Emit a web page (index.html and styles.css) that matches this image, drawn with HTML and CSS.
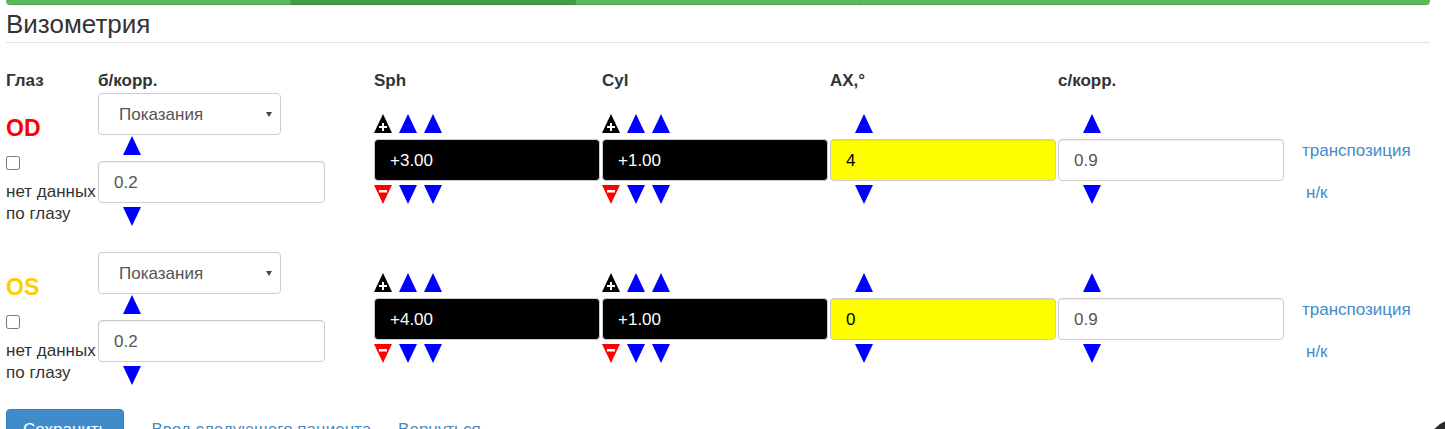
FILE: index.html
```html
<!DOCTYPE html>
<html lang="ru">
<head>
    <meta charset="UTF-8">
    <title>Визометрия</title>
    <link rel="stylesheet" href="styles.css">
</head>
<body>
<div class="page">

    <!-- steps -->
    <div class="progress">
        <div class="progress-bar"></div>
        <div class="progress-bar active"></div>
        <div class="progress-bar"></div>
        <div class="progress-bar"></div>
        <div class="progress-bar"></div>
    </div>

    <h3 class="page-title">Визометрия</h3>
    <hr>

    <div class="vis-grid vis-head">
        <div>Глаз</div>
        <div>б/корр.</div>
        <div>Sph</div>
        <div>Cyl</div>
        <div>AX,°</div>
        <div>с/корр.</div>
        <div></div>
    </div>

    <!-- OD -->
    <div class="vis-grid eye-row">
        <div class="eye-col">
            <div class="eye-name od">OD</div>
            <input type="checkbox" class="no-data-check">
            <div class="no-data">нет данных<br>по глазу</div>
        </div>
        <div class="sc-col">
            <div class="select-wrap">
                <select class="form-control"><option>Показания</option></select>
            </div>
            <div class="arrows arrows-up single">
                <svg class="tri" viewBox="0 0 18 19"><path d="M9 0L18 19H0z" fill="#00f"/></svg>
            </div>
            <input type="text" class="form-control wide" value="0.2">
            <div class="arrows arrows-down single">
                <svg class="tri" viewBox="0 0 18 19"><path d="M0 0H18L9 19z" fill="#00f"/></svg>
            </div>
        </div>
        <div class="val-col">
            <div class="arrows arrows-up">
                <svg class="tri" viewBox="0 0 18 19"><path d="M9 0L18 19H0z" fill="#000"/><path d="M8 9h2v3h3v2h-3v3H8v-3H5v-2h3z" fill="#fff"/></svg>
                <svg class="tri" viewBox="0 0 18 19"><path d="M9 0L18 19H0z" fill="#00f"/></svg>
                <svg class="tri" viewBox="0 0 18 19"><path d="M9 0L18 19H0z" fill="#00f"/></svg>
            </div>
            <input type="text" class="form-control dark" value="+3.00">
            <div class="arrows arrows-down">
                <svg class="tri" viewBox="0 0 18 19"><path d="M0 0H18L9 19z" fill="#f00"/><rect x="5" y="5" width="8" height="2.5" fill="#fff"/></svg>
                <svg class="tri" viewBox="0 0 18 19"><path d="M0 0H18L9 19z" fill="#00f"/></svg>
                <svg class="tri" viewBox="0 0 18 19"><path d="M0 0H18L9 19z" fill="#00f"/></svg>
            </div>
        </div>
        <div class="val-col">
            <div class="arrows arrows-up">
                <svg class="tri" viewBox="0 0 18 19"><path d="M9 0L18 19H0z" fill="#000"/><path d="M8 9h2v3h3v2h-3v3H8v-3H5v-2h3z" fill="#fff"/></svg>
                <svg class="tri" viewBox="0 0 18 19"><path d="M9 0L18 19H0z" fill="#00f"/></svg>
                <svg class="tri" viewBox="0 0 18 19"><path d="M9 0L18 19H0z" fill="#00f"/></svg>
            </div>
            <input type="text" class="form-control dark" value="+1.00">
            <div class="arrows arrows-down">
                <svg class="tri" viewBox="0 0 18 19"><path d="M0 0H18L9 19z" fill="#f00"/><rect x="5" y="5" width="8" height="2.5" fill="#fff"/></svg>
                <svg class="tri" viewBox="0 0 18 19"><path d="M0 0H18L9 19z" fill="#00f"/></svg>
                <svg class="tri" viewBox="0 0 18 19"><path d="M0 0H18L9 19z" fill="#00f"/></svg>
            </div>
        </div>
        <div class="val-col">
            <div class="arrows arrows-up single">
                <svg class="tri" viewBox="0 0 18 19"><path d="M9 0L18 19H0z" fill="#00f"/></svg>
            </div>
            <input type="text" class="form-control yellow" value="4">
            <div class="arrows arrows-down single">
                <svg class="tri" viewBox="0 0 18 19"><path d="M0 0H18L9 19z" fill="#00f"/></svg>
            </div>
        </div>
        <div class="val-col">
            <div class="arrows arrows-up single">
                <svg class="tri" viewBox="0 0 18 19"><path d="M9 0L18 19H0z" fill="#00f"/></svg>
            </div>
            <input type="text" class="form-control" value="0.9">
            <div class="arrows arrows-down single">
                <svg class="tri" viewBox="0 0 18 19"><path d="M0 0H18L9 19z" fill="#00f"/></svg>
            </div>
        </div>
        <div class="links-col">
            <a href="#" class="transp">транспозиция</a>
            <a href="#" class="nk">н/к</a>
        </div>
    </div>

    <!-- OS -->
    <div class="vis-grid eye-row">
        <div class="eye-col">
            <div class="eye-name os">OS</div>
            <input type="checkbox" class="no-data-check">
            <div class="no-data">нет данных<br>по глазу</div>
        </div>
        <div class="sc-col">
            <div class="select-wrap">
                <select class="form-control"><option>Показания</option></select>
            </div>
            <div class="arrows arrows-up single">
                <svg class="tri" viewBox="0 0 18 19"><path d="M9 0L18 19H0z" fill="#00f"/></svg>
            </div>
            <input type="text" class="form-control wide" value="0.2">
            <div class="arrows arrows-down single">
                <svg class="tri" viewBox="0 0 18 19"><path d="M0 0H18L9 19z" fill="#00f"/></svg>
            </div>
        </div>
        <div class="val-col">
            <div class="arrows arrows-up">
                <svg class="tri" viewBox="0 0 18 19"><path d="M9 0L18 19H0z" fill="#000"/><path d="M8 9h2v3h3v2h-3v3H8v-3H5v-2h3z" fill="#fff"/></svg>
                <svg class="tri" viewBox="0 0 18 19"><path d="M9 0L18 19H0z" fill="#00f"/></svg>
                <svg class="tri" viewBox="0 0 18 19"><path d="M9 0L18 19H0z" fill="#00f"/></svg>
            </div>
            <input type="text" class="form-control dark" value="+4.00">
            <div class="arrows arrows-down">
                <svg class="tri" viewBox="0 0 18 19"><path d="M0 0H18L9 19z" fill="#f00"/><rect x="5" y="5" width="8" height="2.5" fill="#fff"/></svg>
                <svg class="tri" viewBox="0 0 18 19"><path d="M0 0H18L9 19z" fill="#00f"/></svg>
                <svg class="tri" viewBox="0 0 18 19"><path d="M0 0H18L9 19z" fill="#00f"/></svg>
            </div>
        </div>
        <div class="val-col">
            <div class="arrows arrows-up">
                <svg class="tri" viewBox="0 0 18 19"><path d="M9 0L18 19H0z" fill="#000"/><path d="M8 9h2v3h3v2h-3v3H8v-3H5v-2h3z" fill="#fff"/></svg>
                <svg class="tri" viewBox="0 0 18 19"><path d="M9 0L18 19H0z" fill="#00f"/></svg>
                <svg class="tri" viewBox="0 0 18 19"><path d="M9 0L18 19H0z" fill="#00f"/></svg>
            </div>
            <input type="text" class="form-control dark" value="+1.00">
            <div class="arrows arrows-down">
                <svg class="tri" viewBox="0 0 18 19"><path d="M0 0H18L9 19z" fill="#f00"/><rect x="5" y="5" width="8" height="2.5" fill="#fff"/></svg>
                <svg class="tri" viewBox="0 0 18 19"><path d="M0 0H18L9 19z" fill="#00f"/></svg>
                <svg class="tri" viewBox="0 0 18 19"><path d="M0 0H18L9 19z" fill="#00f"/></svg>
            </div>
        </div>
        <div class="val-col">
            <div class="arrows arrows-up single">
                <svg class="tri" viewBox="0 0 18 19"><path d="M9 0L18 19H0z" fill="#00f"/></svg>
            </div>
            <input type="text" class="form-control yellow" value="0">
            <div class="arrows arrows-down single">
                <svg class="tri" viewBox="0 0 18 19"><path d="M0 0H18L9 19z" fill="#00f"/></svg>
            </div>
        </div>
        <div class="val-col">
            <div class="arrows arrows-up single">
                <svg class="tri" viewBox="0 0 18 19"><path d="M9 0L18 19H0z" fill="#00f"/></svg>
            </div>
            <input type="text" class="form-control" value="0.9">
            <div class="arrows arrows-down single">
                <svg class="tri" viewBox="0 0 18 19"><path d="M0 0H18L9 19z" fill="#00f"/></svg>
            </div>
        </div>
        <div class="links-col">
            <a href="#" class="transp">транспозиция</a>
            <a href="#" class="nk">н/к</a>
        </div>
    </div>

    <div class="actions">
        <button class="btn-save">Сохранить</button>
        <a href="#" class="next-link">Ввод следующего пациента</a>
        <a href="#" class="back-link">Вернуться</a>
    </div>

    <div class="corner-blob"></div>
</div>
</body>
</html>
```

FILE: styles.css
```css
/* General Page Styles */
body {
    font-family: "Liberation Sans", Arial, sans-serif;
    font-size: 17px;
    color: #333;
    background-color: #fff;
    margin: 0;
    padding: 0;
}

.page {
    height: 429px;
    overflow: hidden;
    padding: 0 15px 0 6px;
}

/* Progress steps */
.progress {
    display: flex;
    height: 5px;
    border-radius: 0 0 4px 4px;
    overflow: hidden;
}

.progress-bar {
    flex: 1;
    background-color: #5cb85c;
    box-shadow: inset 0 -1px 0 rgba(0, 0, 0, 0.12);
    border-right: 1px solid rgba(0, 0, 0, 0.08);
}

.progress-bar.active {
    background-color: #449d44;
}

.progress-bar:last-child {
    border-right: none;
}

/* Title */
.page-title {
    font-size: 26px;
    font-weight: 500;
    line-height: 32px;
    margin: 3px 0 0;
    color: #333;
}

hr {
    border: 0;
    border-top: 1px solid #e3e3e3;
    margin: 2px 0 0;
}

/* Grid */
.vis-grid {
    display: grid;
    grid-template-columns: 92px 276px 228px 228px 228px 244px 1fr;
}

.vis-head {
    font-weight: bold;
    line-height: 24px;
    margin-top: 26px;
}

.eye-row {
    margin-bottom: 26px;
}

/* Eye column */
.eye-col {
    display: flex;
    flex-direction: column;
    align-items: flex-start;
}

.eye-name {
    font-size: 23px;
    font-weight: bold;
    line-height: 26px;
    margin-top: 22px;
}

.eye-name.od {
    color: #ff0000;
}

.eye-name.os {
    color: #ffcc00;
}

.no-data-check {
    width: 14px;
    height: 14px;
    margin: 15px 0 0;
}

.no-data {
    line-height: 22px;
    margin-top: 11px;
    white-space: nowrap;
}

/* Inputs */
.form-control {
    display: block;
    box-sizing: border-box;
    height: 42px;
    width: 226px;
    padding: 2px 15px 0;
    border: 1px solid #ccc;
    border-radius: 4px;
    background-color: #fff;
    color: #555;
    font-family: inherit;
    font-size: 17px;
    box-shadow: inset 0 1px 1px rgba(0, 0, 0, 0.075);
}

.form-control.wide {
    width: 227px;
}

.form-control.dark {
    background-color: #000;
    color: #fff;
}

.form-control.yellow {
    background-color: #ffff00;
    color: #000;
}

.select-wrap {
    position: relative;
    width: 183px;
}

.select-wrap select {
    width: 183px;
    padding: 0 0 0 20px;
    appearance: none;
    -webkit-appearance: none;
    box-shadow: none;
}

.select-wrap::after {
    content: "";
    position: absolute;
    right: 9px;
    top: 19px;
    border-left: 3.5px solid transparent;
    border-right: 3.5px solid transparent;
    border-top: 5px solid #444;
}

/* Arrow buttons */
.arrows {
    display: flex;
    gap: 7px;
    height: 19px;
}

.arrows.single {
    padding-left: 25px;
}

.tri {
    width: 18px;
    height: 19px;
    display: block;
}

.sc-col .arrows-up {
    margin-top: 1px;
    margin-bottom: 6px;
}

.sc-col .arrows-down {
    margin-top: 4px;
}

.val-col {
    padding-top: 21px;
}

.val-col .arrows-up {
    margin-bottom: 6px;
}

.val-col .arrows-down {
    margin-top: 4px;
}

/* Links */
a {
    color: #428bca;
    text-decoration: none;
}

.links-col {
    display: flex;
    flex-direction: column;
    align-items: flex-start;
    padding-top: 46px;
    line-height: 24px;
}

.links-col .nk {
    margin-top: 18px;
    margin-left: 4px;
}

/* Actions */
.actions {
    display: flex;
    align-items: center;
    margin-top: -2px;
    line-height: 41px;
}

.btn-save {
    height: 41px;
    padding: 0 16px;
    background-color: #428bca;
    border: 1px solid #357ebd;
    border-radius: 4px;
    color: #fff;
    font-family: inherit;
    font-size: 17px;
}

.next-link {
    margin-left: 27px;
}

.back-link {
    margin-left: 27px;
}

.corner-blob {
    position: fixed;
    right: -55px;
    bottom: -64px;
    width: 76px;
    height: 76px;
    border-radius: 50%;
    background-color: #2b2b2b;
}
```
